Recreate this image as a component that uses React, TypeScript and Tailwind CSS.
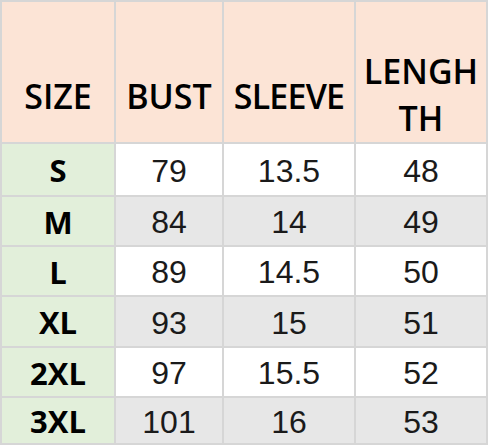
const rows = [
  ["S", "79", "13.5", "48"],
  ["M", "84", "14", "49"],
  ["L", "89", "14.5", "50"],
  ["XL", "93", "15", "51"],
  ["2XL", "97", "15.5", "52"],
  ["3XL", "101", "16", "53"],
];

const rowHeights = ["h-[51px]", "h-[48px]", "h-[48px]", "h-[49px]", "h-[48px]", "h-[45px]"];

export default function App() {
  return (
    <div className="w-[488px] h-[445px] bg-[#d6d6d6] p-[2px] flex flex-col gap-[2px]">
      {/* Header */}
      <div className="grid grid-cols-[112px_106px_130px_130px] gap-[2px] h-[140px] font-['Open_Sans',sans-serif] font-semibold text-[34px] text-black">
        <div className="bg-[#fce4d6] flex items-center justify-center pt-[48px]">SIZE</div>
        <div className="bg-[#fce4d6] flex items-center justify-center pt-[48px]">BUST</div>
        <div className="bg-[#fce4d6] flex items-center justify-center pt-[48px] tracking-[-0.8px]">SLEEVE</div>
        <div className="bg-[#fce4d6] flex items-center justify-center pt-[46px] text-center leading-[47px]">
          LENGH
          <br />
          TH
        </div>
      </div>

      {/* Body */}
      {rows.map((r, i) => (
        <div
          key={r[0]}
          className={`grid grid-cols-[112px_106px_130px_130px] grid-rows-1 gap-[2px] overflow-hidden ${rowHeights[i]}`}
        >
          <div className="bg-[#e2efda] flex items-center justify-center pt-[2px] leading-none font-['Open_Sans',sans-serif] font-bold text-[31px] text-black">
            {r[0]}
          </div>
          {r.slice(1).map((v, j) => (
            <div
              key={j}
              className={`${i % 2 === 0 ? "bg-white" : "bg-[#e7e7e7]"} flex items-center justify-center pt-[2px] leading-none font-['Liberation_Sans',Arial,sans-serif] text-[32px] text-[#1a1a1a]`}
            >
              {v}
            </div>
          ))}
        </div>
      ))}
    </div>
  );
}
